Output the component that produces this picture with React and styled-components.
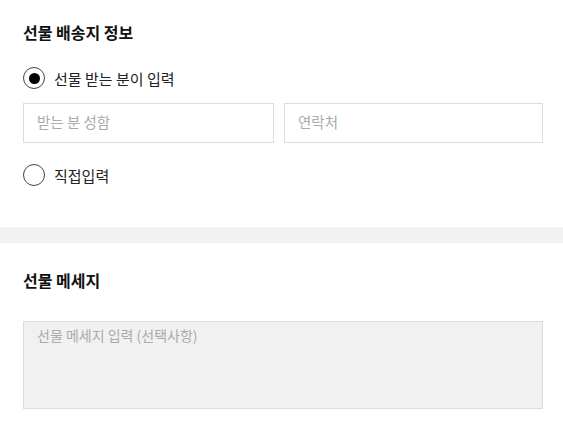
import React, { useState } from 'react';
import styled, { createGlobalStyle } from 'styled-components';

const GlobalStyle = createGlobalStyle`
    html, body {
        margin: 0;
        padding: 0;
        background: #fff;
    }
    body {
        font-family: "Noto Sans CJK KR", "Noto Sans", sans-serif;
        color: #222;
    }
    * {
        box-sizing: border-box;
    }
`;

const Section = styled.section`
    padding: ${({ top }) => top}px 20px ${({ bottom }) => bottom}px 23px;
`;

const Divider = styled.div`
    height: 16px;
    background: #f2f2f2;
`;

const Title = styled.h3`
    margin: 0;
    font-size: 16px;
    line-height: 22px;
    font-weight: 700;
    color: #111;
`;

const RadioRow = styled.label`
    display: flex;
    align-items: center;
    gap: 9px;
    height: 22px;
    margin-top: ${({ mt }) => mt}px;
    font-size: 15px;
    color: #222;
    cursor: pointer;
`;

const RadioCircle = styled.span`
    position: relative;
    width: 22px;
    height: 22px;
    border-radius: 50%;
    border: 1px solid #444;
    flex-shrink: 0;
    &::after {
        content: '';
        display: ${({ checked }) => (checked ? 'block' : 'none')};
        position: absolute;
        top: 4.5px;
        left: 4.5px;
        width: 11px;
        height: 11px;
        border-radius: 50%;
        background: #000;
    }
`;

const InputGrid = styled.div`
    display: grid;
    grid-template-columns: 251px 1fr;
    gap: 10px;
    margin-top: 14px;
`;

const TextInput = styled.input`
    height: 40px;
    border: 1px solid #dcdcdc;
    padding: 0 13px 3px;
    font-family: inherit;
    font-size: 14.5px;
    color: #222;
    outline: none;
    &::placeholder {
        color: #aaa;
    }
`;

const MessageBox = styled.textarea`
    display: block;
    width: 100%;
    height: 88px;
    margin-top: 30px;
    border: 1px solid #dcdcdc;
    background: #f1f1f1;
    padding: 3px 13px;
    font-family: inherit;
    font-size: 14px;
    line-height: 20px;
    resize: none;
    outline: none;
    &::placeholder {
        color: #aaa;
    }
`;

export default function App() {
    const [mode, setMode] = useState('receiver');
    return (
        <>
            <GlobalStyle />
            <Section top={21} bottom={41}>
                <Title>선물 배송지 정보</Title>
                <RadioRow mt={24} onClick={() => setMode('receiver')}>
                    <RadioCircle checked={mode === 'receiver'} />
                    선물 받는 분이 입력
                </RadioRow>
                <InputGrid>
                    <TextInput placeholder="받는 분 성함" />
                    <TextInput placeholder="연락처" />
                </InputGrid>
                <RadioRow mt={21} onClick={() => setMode('direct')}>
                    <RadioCircle checked={mode === 'direct'} />
                    직접입력
                </RadioRow>
            </Section>
            <Divider />
            <Section top={26} bottom={24}>
                <Title>선물 메세지</Title>
                <MessageBox placeholder="선물 메세지 입력 (선택사항)" />
            </Section>
        </>
    );
}
